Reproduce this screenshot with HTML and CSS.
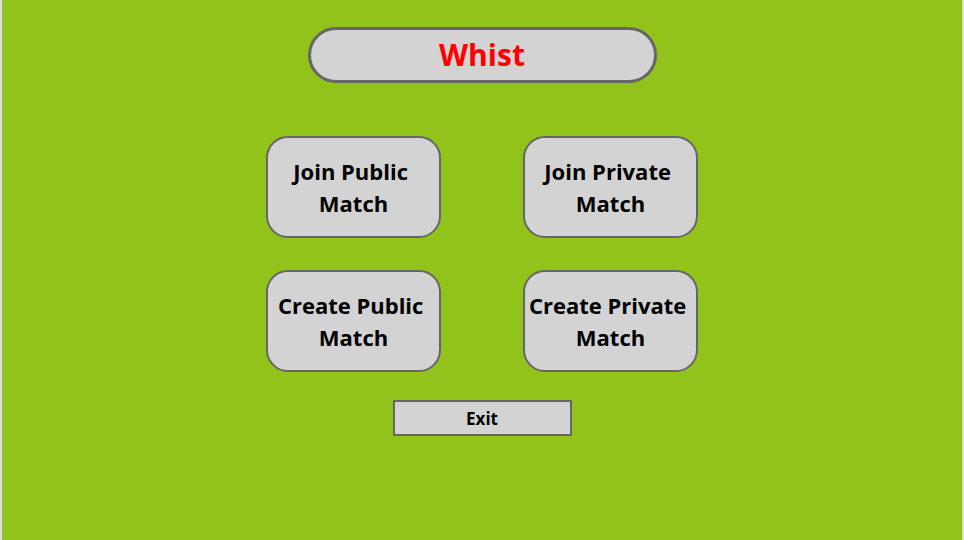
FILE: index.html
```html
<!DOCTYPE html>
<html>
<head>
<meta charset="utf-8">
<link rel="stylesheet" href="styles.css">
</head>
<body>
<div class="screen">
  <div class="title">Whist</div>
  <div class="grid">
    <button class="btn">Join Public&nbsp;<br>Match</button>
    <button class="btn">Join Private&nbsp;<br>Match</button>
    <button class="btn">Create Public&nbsp;<br>Match</button>
    <button class="btn">Create Private&nbsp;<br>Match</button>
  </div>
  <button class="exit">Exit</button>
</div>
</body>
</html>
```
FILE: styles.css
```css
html, body {
  margin: 0;
  padding: 0;
  width: 964px;
  height: 540px;
  overflow: hidden;
}
body {
  background: #dcdcdc;
  font-family: "Open Sans", "Noto Sans", sans-serif;
}
.screen {
  box-sizing: border-box;
  margin: 0 2px;
  width: 960px;
  height: 540px;
  background: #91c31a;
  display: flex;
  flex-direction: column;
  align-items: center;
  padding-top: 27px;
}
.title {
  box-sizing: border-box;
  width: 349px;
  height: 56px;
  border: 3px solid #666666;
  border-radius: 28px;
  background: #d3d3d3;
  color: #ff0000;
  font-weight: 700;
  font-size: 30px;
  line-height: 50px;
  text-align: center;
}
.grid {
  margin-top: 53px;
  display: grid;
  grid-template-columns: 175px 175px;
  column-gap: 82px;
  row-gap: 32px;
}
.btn {
  box-sizing: border-box;
  width: 175px;
  height: 102px;
  border: 2px solid #666666;
  border-radius: 22px;
  background: #d3d3d3;
  color: #000;
  font-family: "Open Sans", "Noto Sans", sans-serif;
  font-weight: 700;
  font-size: 22px;
  line-height: 32px;
  text-align: center;
  padding: 0;
  white-space: nowrap;
}
.exit {
  box-sizing: border-box;
  margin-top: 28px;
  width: 179px;
  height: 36px;
  border: 2px solid #666666;
  border-radius: 0;
  background: #d3d3d3;
  color: #000;
  font-family: "Open Sans", "Noto Sans", sans-serif;
  font-weight: 700;
  font-size: 17px;
  padding: 0;
}
```
